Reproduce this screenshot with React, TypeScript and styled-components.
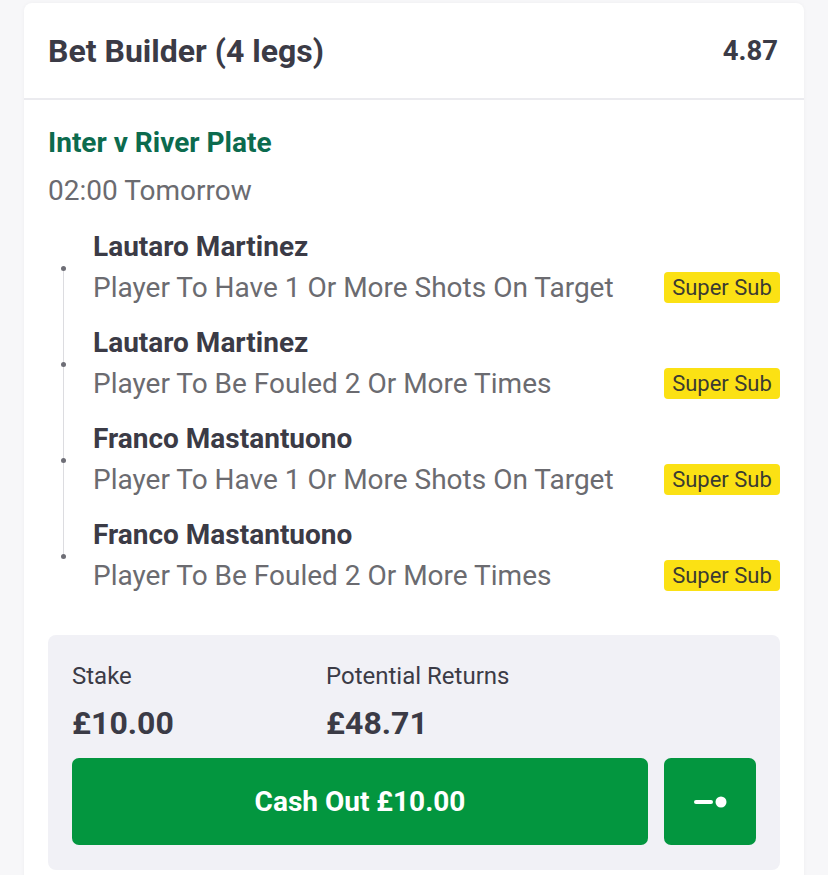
import styled, { createGlobalStyle } from 'styled-components';

interface Leg {
  player: string;
  market: string;
}

const legs: Leg[] = [
  { player: 'Lautaro Martinez', market: 'Player To Have 1 Or More Shots On Target' },
  { player: 'Lautaro Martinez', market: 'Player To Be Fouled 2 Or More Times' },
  { player: 'Franco Mastantuono', market: 'Player To Have 1 Or More Shots On Target' },
  { player: 'Franco Mastantuono', market: 'Player To Be Fouled 2 Or More Times' },
];

function App() {
  return (
    <>
      <GlobalStyle />
      <Card>
        <Header>
          <Title>Bet Builder (4 legs)</Title>
          <Odds>4.87</Odds>
        </Header>
        <Body>
          <EventName>Inter v River Plate</EventName>
          <EventTime>02:00 Tomorrow</EventTime>
          <LegList>
            {legs.map((leg, idx) => (
              <LegItem key={idx} isLast={idx === legs.length - 1}>
                <PlayerName>{leg.player}</PlayerName>
                <MarketRow>
                  <Market>{leg.market}</Market>
                  <Badge>Super Sub</Badge>
                </MarketRow>
              </LegItem>
            ))}
          </LegList>
          <StakeBox>
            <Figures>
              <Figure>
                <FigureLabel>Stake</FigureLabel>
                <FigureValue>£10.00</FigureValue>
              </Figure>
              <Figure>
                <FigureLabel>Potential Returns</FigureLabel>
                <FigureValue>£48.71</FigureValue>
              </Figure>
            </Figures>
            <Actions>
              <CashOutButton>Cash Out £10.00</CashOutButton>
              <SliderButton aria-label="Partial cash out">
                <svg width="40" height="20" viewBox="0 0 40 20">
                  <line x1="6" y1="10" x2="21" y2="10" stroke="#fff" strokeWidth="4" strokeLinecap="round" />
                  <circle cx="31" cy="10" r="5.5" fill="#fff" />
                </svg>
              </SliderButton>
            </Actions>
          </StakeBox>
        </Body>
      </Card>
    </>
  );
}

const GlobalStyle = createGlobalStyle`
  body {
    margin: 0;
    background: #f7f7f9;
    font-family: Roboto, "Liberation Sans", Arial, sans-serif;
    color: #3b3b46;
  }
`;

const Card = styled.div`
  width: 780px;
  margin: 3px 0 0 24px;
  min-height: 880px;
  background: #fff;
  border-radius: 8px 8px 0 0;
  box-shadow: 0 0 4px rgba(0, 0, 0, 0.04);
`;

const Header = styled.div`
  height: 95px;
  display: flex;
  justify-content: space-between;
  align-items: center;
  padding: 0 26px 0 24px;
  border-bottom: 2px solid #ebebef;
`;

const Title = styled.h2`
  margin: 0;
  font-size: 32px;
  font-weight: 700;
  color: #3b3b46;
`;

const Odds = styled.span`
  font-size: 27.5px;
  font-weight: 700;
  color: #3b3b46;
`;

const Body = styled.div`
  padding: 26px 24px 0;
`;

const EventName = styled.div`
  font-size: 28px;
  line-height: 34px;
  font-weight: 700;
  color: #0c6b4e;
`;

const EventTime = styled.div`
  margin-top: 14px;
  font-size: 28px;
  line-height: 34px;
  color: #6b6b70;
`;

const LegList = styled.div`
  margin-top: 19px;
  padding-left: 45px;
`;

const LegItem = styled.div<{ isLast: boolean }>`
  position: relative;
  padding-bottom: 16px;

  &::before {
    content: '';
    position: absolute;
    left: -32px;
    top: 39px;
    width: 5px;
    height: 5px;
    border-radius: 50%;
    background: #6e6e76;
    z-index: 1;
  }

  ${props => !props.isLast && `
    &::after {
      content: '';
      position: absolute;
      left: -30px;
      top: 41px;
      width: 1px;
      height: 96px;
      background: #dcdce0;
    }
  `}
`;

const PlayerName = styled.div`
  font-size: 28px;
  line-height: 40px;
  font-weight: 700;
  color: #3b3b46;
`;

const MarketRow = styled.div`
  display: flex;
  justify-content: space-between;
  align-items: center;
  height: 40px;
`;

const Market = styled.div`
  font-size: 28px;
  color: #6b6b70;
`;

const Badge = styled.span`
  width: 116px;
  height: 31px;
  display: flex;
  align-items: center;
  justify-content: center;
  background: #fbe114;
  border-radius: 4px;
  font-size: 22px;
  color: #3b3b32;
`;

const StakeBox = styled.div`
  margin-top: 24px;
  background: #f1f1f6;
  border-radius: 8px;
  padding: 26px 24px 25px;
`;

const Figures = styled.div`
  display: grid;
  grid-template-columns: 254px 1fr;
`;

const Figure = styled.div`
  display: flex;
  flex-direction: column;
`;

const FigureLabel = styled.div`
  font-size: 24px;
  line-height: 30px;
  color: #3b3b46;
`;

const FigureValue = styled.div`
  margin-top: 12px;
  font-size: 32px;
  line-height: 40px;
  font-weight: 700;
  color: #3b3b46;
`;

const Actions = styled.div`
  display: flex;
  gap: 16px;
  margin-top: 15px;
`;

const CashOutButton = styled.button`
  flex: 1;
  height: 87px;
  border: none;
  border-radius: 7px;
  background: #03963f;
  color: #fff;
  font-family: inherit;
  font-size: 28px;
  font-weight: 700;
  cursor: pointer;
`;

const SliderButton = styled.button`
  width: 92px;
  height: 87px;
  border: none;
  border-radius: 7px;
  background: #03963f;
  display: flex;
  align-items: center;
  justify-content: center;
  cursor: pointer;
  padding: 0;
`;

export default App;
